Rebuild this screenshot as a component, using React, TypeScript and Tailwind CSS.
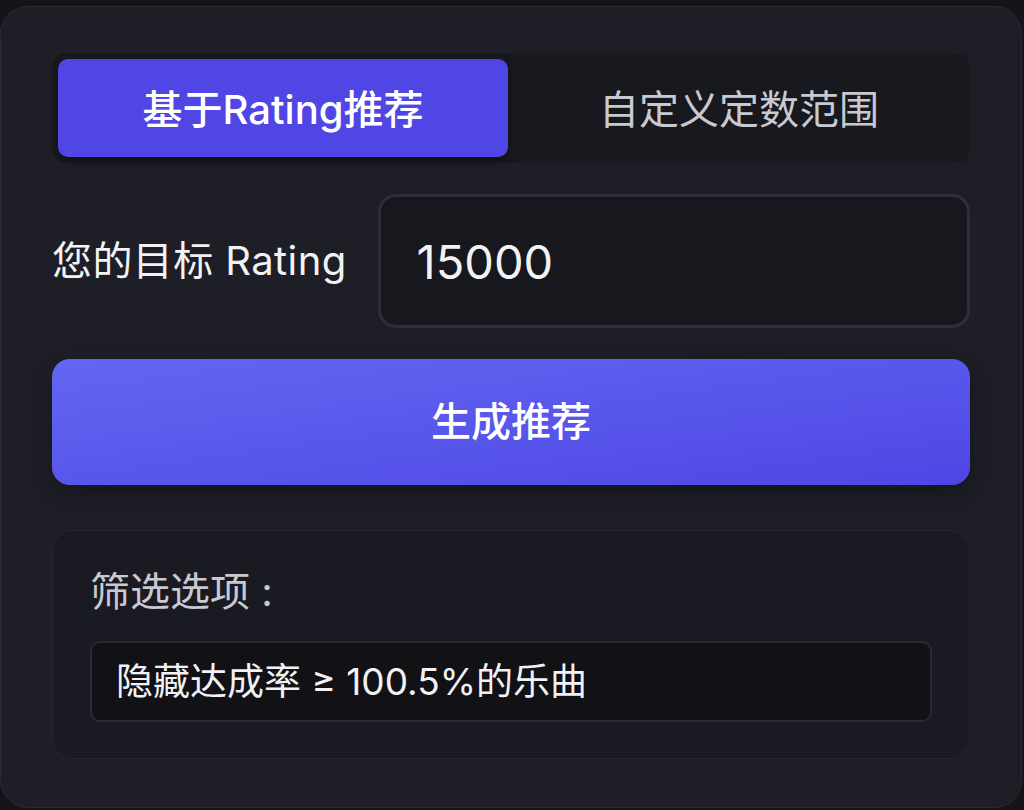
import { useState } from "react";

const font = {
  fontFamily: '"Inter", "Noto Sans CJK SC", sans-serif',
};

export default function App() {
  const [mode, setMode] = useState("rating");
  const [target, setTarget] = useState("15000");

  return (
    <div className="min-h-[810px] w-[1024px] bg-[#141419] pt-[6px]" style={font}>
      <div className="w-[1022px] h-[802px] rounded-[28px] border border-[#2b2b36] bg-[#1e1e27] px-[51px] pt-[46px]">
        {/* Mode tabs */}
        <div className="flex h-[110px] gap-[6px] rounded-[14px] bg-[#18181f] p-[6px]">
          <button
            onClick={() => setMode("rating")}
            className={
              mode === "rating"
                ? "flex-1 rounded-[10px] bg-[#4f46e5] pt-[4px] text-[40px] font-medium text-white shadow-[0_4px_10px_rgba(0,0,0,0.35)]"
                : "flex-1 rounded-[10px] pt-[4px] text-[40px] text-[#c9c9d1]"
            }
          >
            基于Rating推荐
          </button>
          <button
            onClick={() => setMode("range")}
            className={
              mode === "range"
                ? "flex-1 rounded-[10px] bg-[#4f46e5] pt-[4px] text-[40px] font-medium text-white shadow-[0_4px_10px_rgba(0,0,0,0.35)]"
                : "flex-1 rounded-[10px] pt-[4px] text-[40px] text-[#c9c9d1]"
            }
          >
            自定义定数范围
          </button>
        </div>

        {/* Target rating */}
        <div className="mt-[31px] flex items-center gap-[31px]">
          <label className="whitespace-nowrap text-[40px] tracking-[0.4px] text-[#f2f2f5]">您的目标 Rating</label>
          <input
            value={target}
            onChange={(e) => setTarget(e.target.value)}
            className="h-[134px] min-w-0 flex-1 rounded-[18px] border-[3px] border-[#2e2e39] bg-[#17171e] px-[36px] text-[47px] text-[#f2f2f5] outline-none"
          />
        </div>

        <button className="mt-[31px] h-[126px] w-full rounded-[18px] bg-gradient-to-br from-[#6366f1] to-[#4f46e5] text-[40px] font-medium text-white shadow-[0_8px_20px_rgba(0,0,0,0.3)]">
          生成推荐
        </button>

        {/* Filters */}
        <div className="mt-[45px] h-[229px] rounded-[20px] border border-[#272731] bg-[#1a1a22] px-[37px] pt-[37px]">
          <div className="text-[40px] leading-[48px] text-[#c9c9d1]">筛选选项 :</div>
          <div className="mt-[25px] flex h-[81px] items-center rounded-[10px] border-2 border-[#2a2a34] bg-[#111116] px-[24px] text-[37px] text-[#f2f2f5]">
            隐藏达成率 ≥ 100.5%的乐曲
          </div>
        </div>
      </div>
    </div>
  );
}
